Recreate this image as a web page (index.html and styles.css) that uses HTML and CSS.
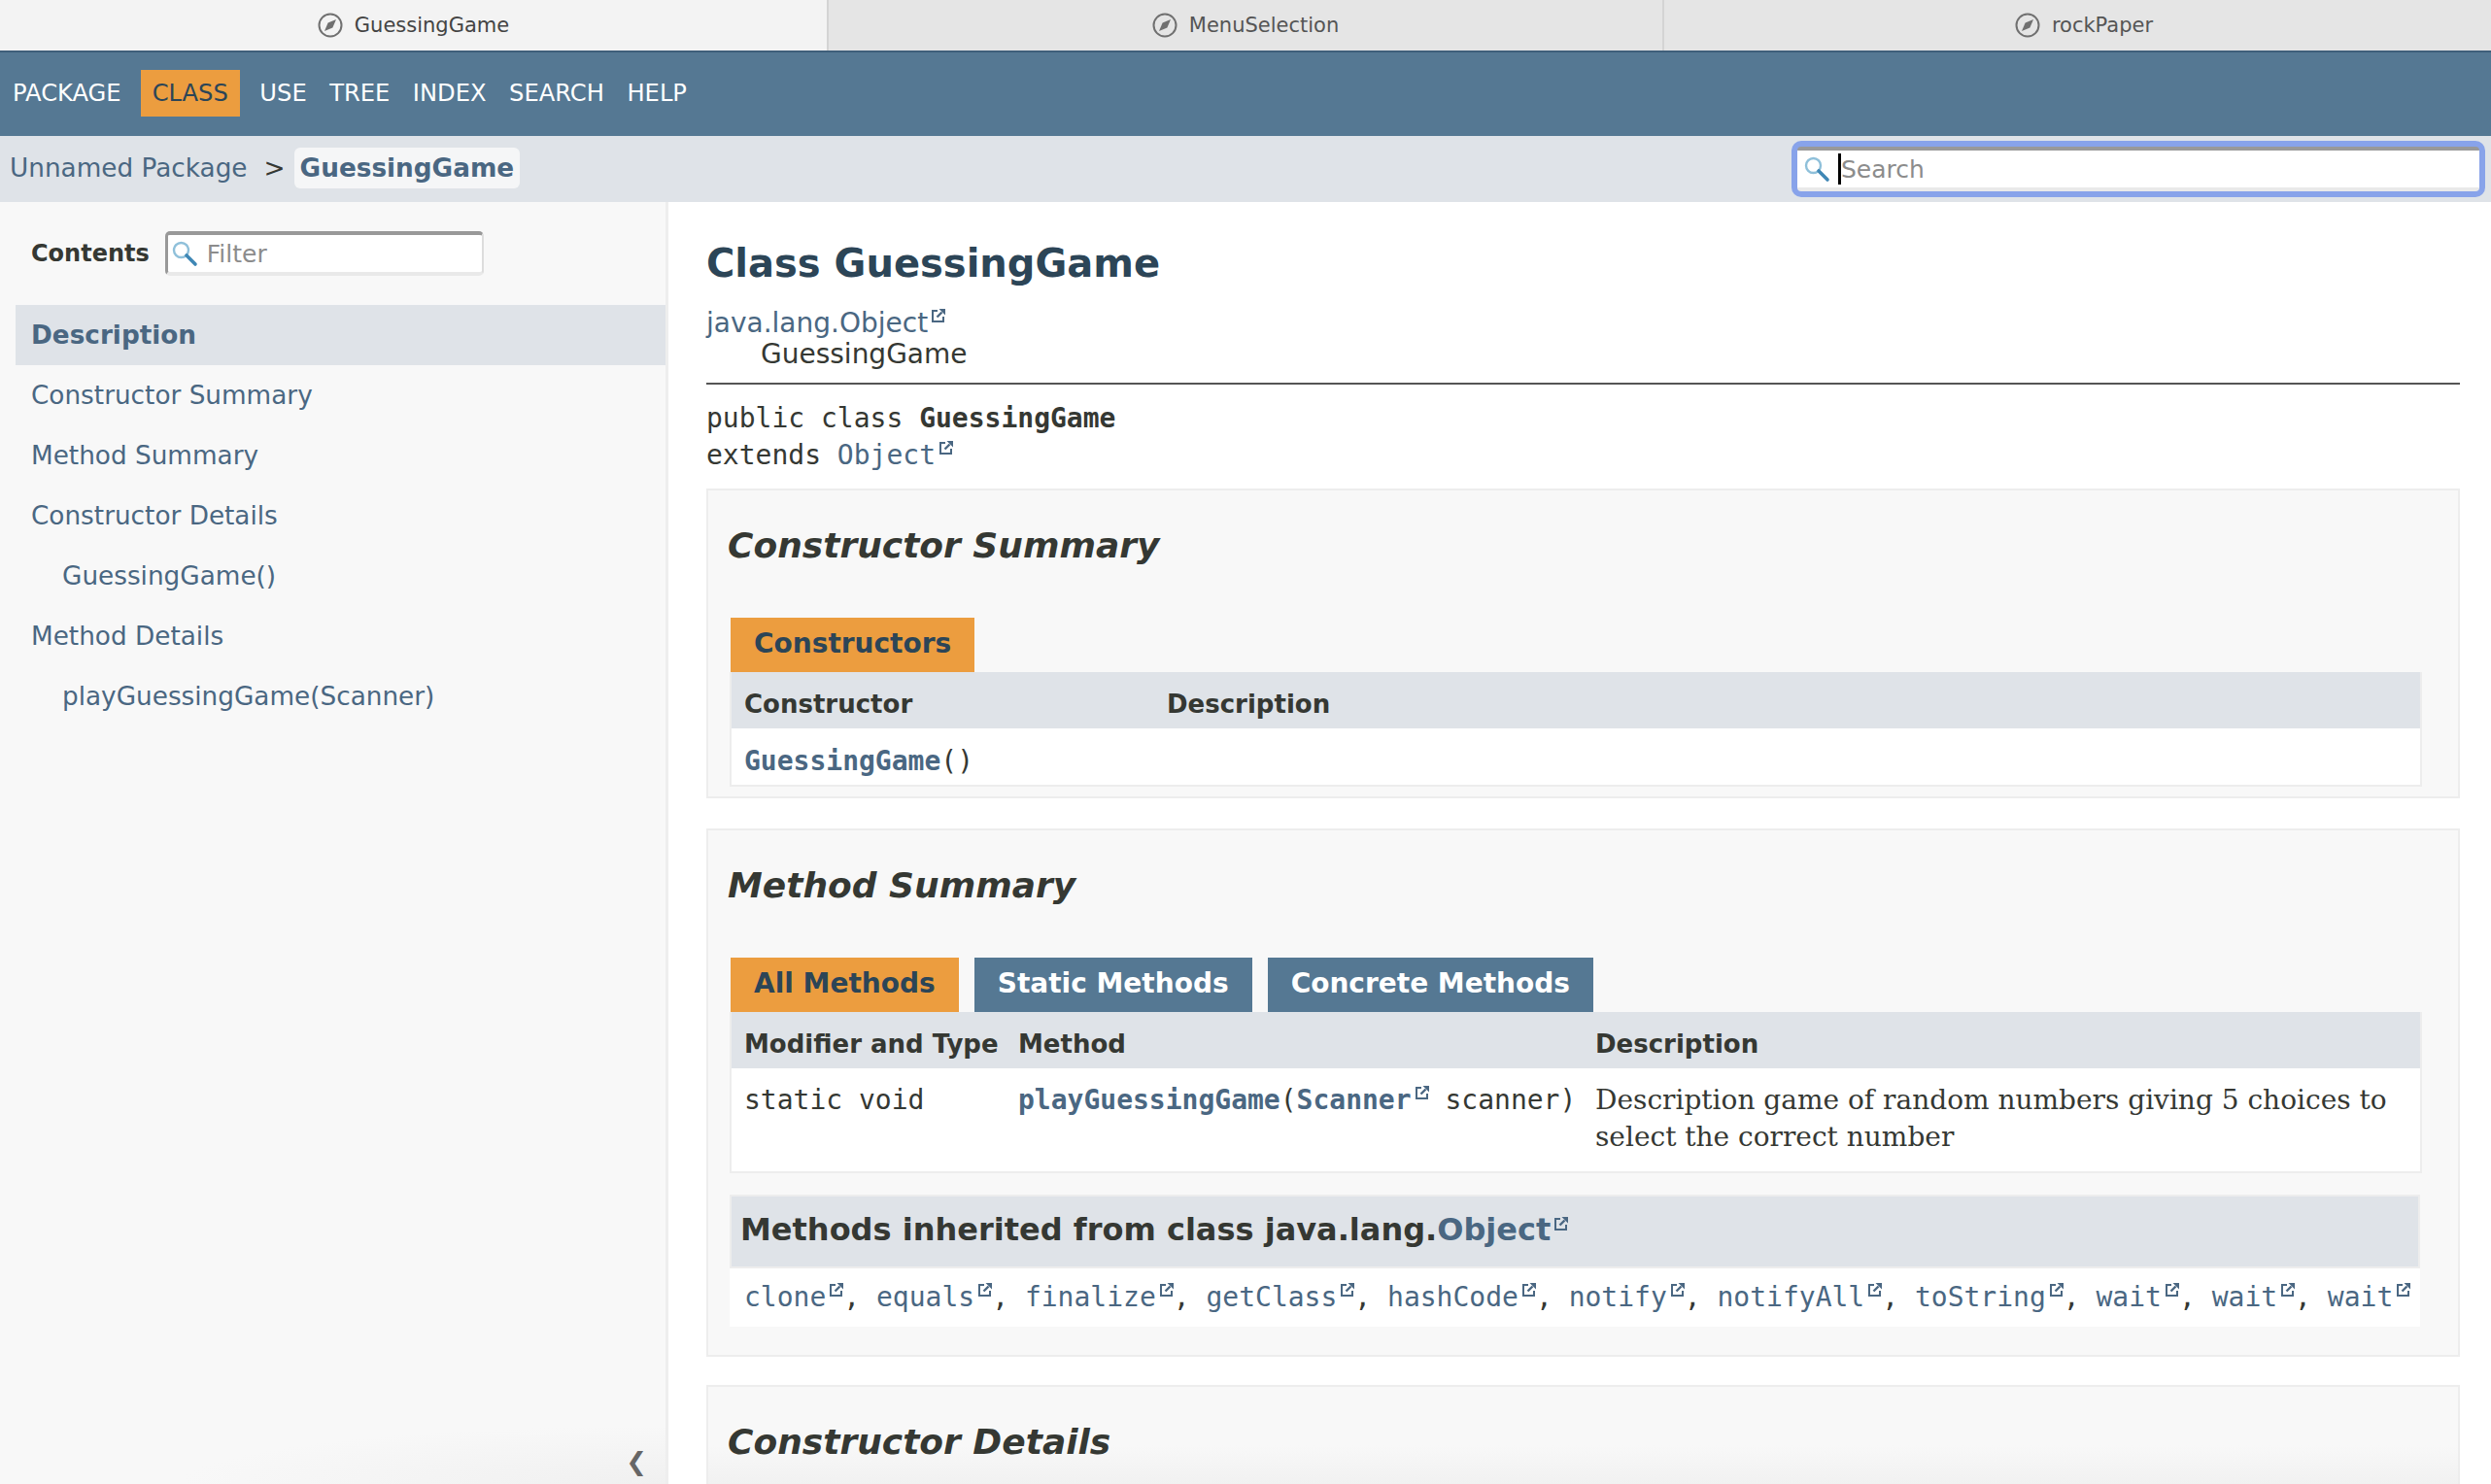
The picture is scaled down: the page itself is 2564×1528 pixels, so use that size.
FILE: index.html
```html
<!DOCTYPE html>
<html lang="en">
<head>
    <meta charset="UTF-8">
    <title>GuessingGame</title>
    <link rel="stylesheet" href="styles.css">
</head>
<body>
    <svg class="sprite" width="0" height="0">
        <symbol id="compass" viewBox="0 0 26 26">
            <circle cx="13" cy="13" r="11.5" fill="none" stroke="#707070" stroke-width="2"/>
            <path d="M19 7 L15.4 15.4 L7 19 L10.6 10.6 Z" fill="#707070"/>
        </symbol>
        <symbol id="ext" viewBox="0 0 14 14">
            <path d="M6 2 H1 V13 H12 V8" fill="none" stroke="currentColor" stroke-width="2"/>
            <path d="M5.5 8.5 L10.5 3.5" fill="none" stroke="currentColor" stroke-width="2.4"/>
            <path d="M7.5 0 H14 V6.5 Z" fill="currentColor"/>
        </symbol>
        <symbol id="glass" viewBox="0 0 28 28">
            <circle cx="10.5" cy="10.5" r="7.5" fill="#fff" stroke="#8fc0da" stroke-width="2.4"/>
            <path d="M16 16 L25 25" stroke="#3f87b5" stroke-width="3.6" stroke-linecap="round"/>
        </symbol>
    </svg>

    <div class="tab-bar">
        <div class="browser-tab active"><svg class="compass"><use href="#compass"/></svg>GuessingGame</div>
        <div class="browser-tab"><svg class="compass"><use href="#compass"/></svg>MenuSelection</div>
        <div class="browser-tab"><svg class="compass"><use href="#compass"/></svg>rockPaper</div>
    </div>

    <nav class="top-nav">
        <a>PACKAGE</a>
        <a class="current">CLASS</a>
        <a>USE</a>
        <a>TREE</a>
        <a>INDEX</a>
        <a>SEARCH</a>
        <a>HELP</a>
    </nav>

    <div class="sub-nav">
        <div class="crumbs">
            <a class="link">Unnamed Package</a>
            <span class="crumb-sep">&gt;</span>
            <a class="crumb-current">GuessingGame</a>
        </div>
        <div class="search-ring">
            <div class="search-box">
                <svg class="glass"><use href="#glass"/></svg>
                <span class="caret"></span>
                <input class="search-input" type="text" placeholder="Search">
            </div>
        </div>
    </div>

    <div class="page">
        <aside class="sidebar">
            <div class="toc-head">
                <b>Contents</b>
                <div class="filter-box">
                    <svg class="glass small"><use href="#glass"/></svg>
                    <input class="filter-input" type="text" placeholder="Filter">
                </div>
            </div>
            <ul class="toc">
                <li class="selected">Description</li>
                <li>Constructor Summary</li>
                <li>Method Summary</li>
                <li>Constructor Details</li>
                <li class="sub">GuessingGame()</li>
                <li>Method Details</li>
                <li class="sub">playGuessingGame(Scanner)</li>
            </ul>
            <div class="collapse">❮</div>
        </aside>

        <main class="content">
            <h1>Class GuessingGame</h1>
            <div class="inherit-tree">
                <div><a class="link">java.lang.Object<svg class="ext"><use href="#ext"/></svg></a></div>
                <div class="tree-child">GuessingGame</div>
            </div>
            <hr>
            <div class="signature">
                <div>public class <b>GuessingGame</b></div>
                <div>extends <a class="link">Object<svg class="ext"><use href="#ext"/></svg></a></div>
            </div>

            <section class="box">
                <h2>Constructor Summary</h2>
                <div class="tabs">
                    <span class="tab on">Constructors</span>
                </div>
                <div class="summary ctor-grid">
                    <div class="th">Constructor</div>
                    <div class="th">Description</div>
                    <div class="td code"><a class="link"><b>GuessingGame</b></a>()</div>
                    <div class="td"></div>
                </div>
            </section>

            <section class="box">
                <h2>Method Summary</h2>
                <div class="tabs">
                    <span class="tab on">All Methods</span>
                    <span class="tab">Static Methods</span>
                    <span class="tab">Concrete Methods</span>
                </div>
                <div class="summary method-grid">
                    <div class="th">Modifier and Type</div>
                    <div class="th">Method</div>
                    <div class="th">Description</div>
                    <div class="td tall code">static void</div>
                    <div class="td tall code nowrap"><a class="link"><b>playGuessingGame</b></a>(<a class="link"><b>Scanner</b><svg class="ext"><use href="#ext"/></svg></a> scanner)</div>
                    <div class="td tall desc">Description game of random numbers giving 5 choices to select the correct number</div>
                </div>
                <div class="inherited">
                    <h3>Methods inherited from class java.lang.<a class="link">Object<svg class="ext"><use href="#ext"/></svg></a></h3>
                    <div class="inherited-list code">
                        <a class="link">clone<svg class="ext"><use href="#ext"/></svg></a>, <a class="link">equals<svg class="ext"><use href="#ext"/></svg></a>, <a class="link">finalize<svg class="ext"><use href="#ext"/></svg></a>, <a class="link">getClass<svg class="ext"><use href="#ext"/></svg></a>, <a class="link">hashCode<svg class="ext"><use href="#ext"/></svg></a>, <a class="link">notify<svg class="ext"><use href="#ext"/></svg></a>, <a class="link">notifyAll<svg class="ext"><use href="#ext"/></svg></a>, <a class="link">toString<svg class="ext"><use href="#ext"/></svg></a>, <a class="link">wait<svg class="ext"><use href="#ext"/></svg></a>, <a class="link">wait<svg class="ext"><use href="#ext"/></svg></a>, <a class="link">wait<svg class="ext"><use href="#ext"/></svg></a>
                    </div>
                </div>
            </section>

            <section class="box details">
                <h2>Constructor Details</h2>
            </section>
        </main>
    </div>
</body>
</html>
```
FILE: styles.css
```css
* {
    box-sizing: border-box;
}
html, body {
    height: 100%;
}
body {
    margin: 0;
    height: 1528px;
    overflow: hidden;
    display: flex;
    flex-direction: column;
    font-family: "DejaVu Sans", sans-serif;
    font-size: 28px;
    color: #353833;
    background-color: #fff;
}
.sprite {
    position: absolute;
}
.link {
    color: #4a6782;
}
.code {
    font-family: "DejaVu Sans Mono", monospace;
}
.nowrap {
    white-space: nowrap;
}

/* browser tabs */
.tab-bar {
    display: grid;
    grid-template-columns: 851px 860px 866px;
    height: 52px;
    flex: none;
    overflow: hidden;
    background-color: #e5e5e5;
}
.browser-tab {
    display: flex;
    align-items: center;
    justify-content: center;
    gap: 12px;
    padding-bottom: 1px;
    font-size: 21px;
    color: #555;
    border-left: 2px solid #d4d4d4;
}
.browser-tab.active {
    background-color: #f3f3f3;
    border-left: none;
    color: #444;
}
.compass {
    width: 26px;
    height: 26px;
}

/* top nav */
.top-nav {
    display: flex;
    align-items: center;
    gap: 23.5px;
    height: 88px;
    flex: none;
    padding: 0 0 2px 13px;
    font-size: 24.2px;
    color: #fff;
    background-color: #557893;
    border-top: 2px solid #3f5f7a;
}
.top-nav .current {
    display: flex;
    align-items: center;
    height: 48px;
    margin: 0 -3px 0 -3.5px;
    padding: 0 12px;
    background-color: #ec9d3f;
    color: #2c4557;
}

/* breadcrumbs + search */
.sub-nav {
    display: flex;
    align-items: center;
    justify-content: space-between;
    height: 68px;
    flex: none;
    padding: 0 6px 0 10px;
    background-color: #dfe3e8;
    font-size: 26.3px;
}
.crumbs {
    display: flex;
    align-items: center;
    margin-bottom: 2px;
}
.crumb-sep {
    margin: 0 9px 0 17px;
}
.crumb-current {
    display: flex;
    align-items: center;
    height: 42px;
    padding: 0 6px;
    font-weight: bold;
    color: #4a6782;
    background-color: #f5f6f7;
    border-radius: 6px;
}
.search-ring {
    width: 714px;
    height: 58px;
    padding: 6px;
    background-color: #88a3ea;
    border-radius: 10px;
}
.search-box, .filter-box {
    display: flex;
    align-items: center;
    height: 100%;
    background-color: #fff;
    border-radius: 4px;
    border-top: 4px solid #999;
    border-bottom: 4px solid #e9e9e9;
}
.search-box {
    padding-left: 6px;
}
.glass {
    width: 28px;
    height: 28px;
    flex: none;
}
.caret {
    width: 3px;
    height: 32px;
    margin-left: 8px;
    background-color: #000;
    flex: none;
}
input {
    border: none;
    outline: none;
    padding: 0;
    min-width: 0;
    flex: 1;
    background: none;
    font-family: "DejaVu Sans", sans-serif;
    font-size: 25px;
}
input::placeholder {
    color: #8c8c8c;
    opacity: 1;
}

/* main area */
.page {
    display: flex;
    flex: 1;
    min-height: 0;
}
.sidebar {
    display: flex;
    flex-direction: column;
    width: 688px;
    flex: none;
    padding-left: 16px;
    background: radial-gradient(ellipse 500px 60px at 100% 100%, #f0f0f0, #f8f8f8);
    border-right: 3px solid #eee;
    font-size: 26.3px;
    color: #4a6782;
}
.toc-head {
    display: flex;
    align-items: center;
    height: 106px;
    padding: 0 0 0 16px;
    color: #353833;
}
.toc-head b {
    font-size: 24px;
}
.filter-box {
    width: 328px;
    height: 46px;
    margin-left: 16px;
    padding-left: 3px;
    border-left: 3px solid #999;
    border-right: 2px solid #ddd;
    border-radius: 5px;
}
.glass.small {
    margin-right: 9px;
}
.toc {
    list-style: none;
    margin: 0;
    padding: 0;
}
.toc li {
    display: flex;
    align-items: center;
    height: 62px;
    padding-left: 16px;
}
.toc li.sub {
    padding-left: 48px;
}
.toc li.selected {
    font-weight: bold;
    background-color: #dfe3e8;
}
.collapse {
    margin-top: auto;
    padding: 0 19px 8px 0;
    text-align: right;
    font-size: 26px;
    color: #666;
}

.content {
    flex: 1;
    min-width: 0;
    padding: 0 32px 0 39px;
}
h1 {
    margin: 36px 0 0;
    font-size: 40px;
    line-height: 54px;
    color: #2c4557;
}
.inherit-tree {
    margin-top: 19px;
    line-height: 32px;
}
.tree-child {
    padding-left: 56px;
}
.ext {
    width: 14px;
    height: 14px;
    margin-left: 4px;
    vertical-align: 10px;
}
hr {
    height: 2px;
    margin: 13px 0 0;
    border: none;
    background-color: #555;
}
.signature {
    margin-top: 16px;
    font-family: "DejaVu Sans Mono", monospace;
    line-height: 38px;
}
.box {
    padding: 0 24px 10px 23px;
    margin-top: 15px;
    background-color: #f8f8f8;
    border: 2px solid #ededed;
}
.box + .box {
    margin-top: 31px;
}
.box.details {
    height: 110px;
    margin-top: 29px;
    background: linear-gradient(#f8f8f8 60px, #f1f1f1 100px);
}
h2 {
    height: 131px;
    margin: 0 0 0 -3px;
    padding-top: 32px;
    font-size: 36px;
    font-style: italic;
    line-height: 50px;
}
.tabs {
    display: flex;
    gap: 16px;
    height: 56px;
}
.tab {
    display: flex;
    align-items: center;
    padding: 0 24px 3px;
    font-weight: bold;
    color: #fff;
    background-color: #557893;
}
.tab.on {
    color: #2c4557;
    background-color: #ec9d3f;
}
.summary {
    display: grid;
    width: 1742px;
    margin-left: -1px;
    border: 2px solid #ededed;
    border-top: none;
    background-color: #fff;
}
.ctor-grid {
    grid-template-columns: 435px 1fr;
}
.method-grid {
    grid-template-columns: 282px 594px 1fr;
}
.th {
    height: 58px;
    padding: 8px 0 0 13px;
    display: flex;
    align-items: center;
    font-size: 26px;
    font-weight: bold;
    background-color: #dfe3e8;
}
.td {
    padding: 15px 14px 5px 13px;
    line-height: 38px;
}
.td.tall {
    padding: 14px 14px 16px 13px;
}
.desc {
    font-family: "DejaVu Serif", serif;
    font-size: 28px;
}
.inherited {
    width: 1740px;
    margin: 22px 0 19px -1px;
}
h3 {
    height: 76px;
    margin: 0;
    padding-left: 9px;
    font-size: 32px;
    line-height: 68px;
    background-color: #dfe3e8;
    border: 2px solid #ededed;
}
.inherited-list {
    height: 60px;
    padding-left: 15px;
    white-space: nowrap;
    line-height: 60px;
    background-color: #fff;
}
```
